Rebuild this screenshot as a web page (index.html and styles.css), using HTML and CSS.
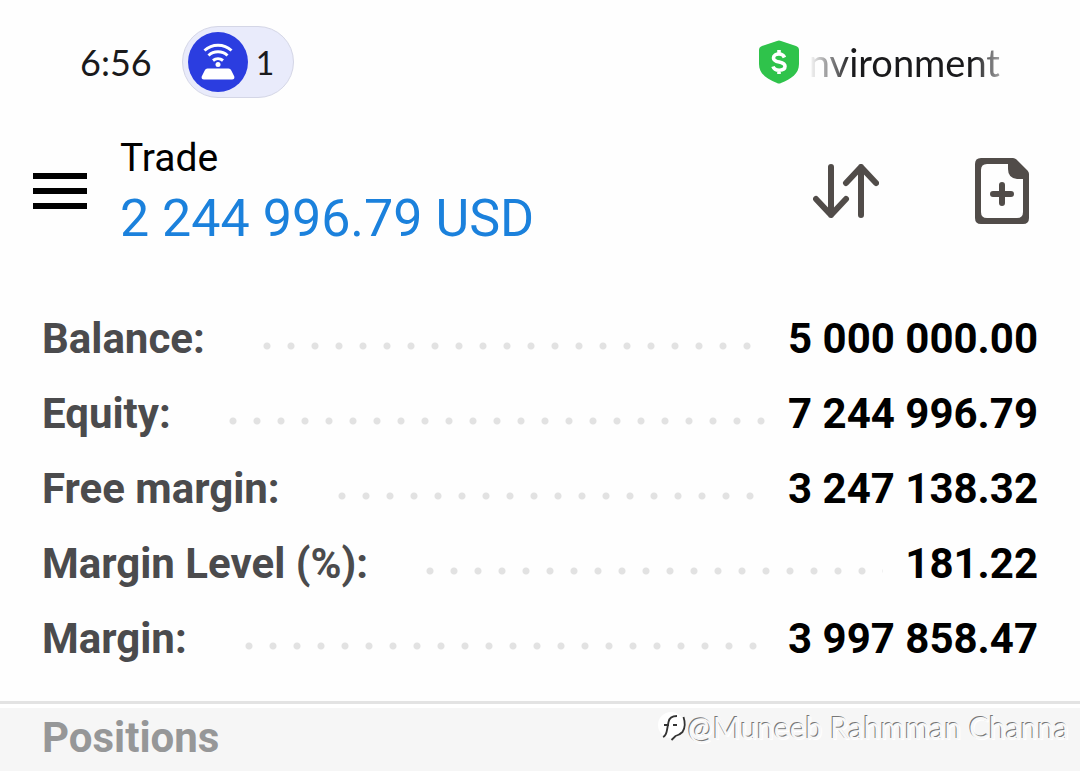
FILE: index.html
```html
<!DOCTYPE html>
<html lang="en">
<head>
    <meta charset="UTF-8">
    <meta name="viewport" content="width=device-width, initial-scale=1.0">
    <title>Trade</title>
    <link rel="stylesheet" href="styles.css">
</head>
<body>
    <div class="status-bar">
        <span class="clock">6:56</span>
        <div class="hotspot">
            <svg class="hotspot-icon" viewBox="0 0 60 60" aria-hidden="true">
                <circle cx="30" cy="30" r="30" fill="#2b3de0"/>
                <g fill="none" stroke="#fff" stroke-width="3" stroke-linecap="butt">
                    <path d="M16.500 18.500a20 20 0 0 1 27 0"/>
                    <path d="M20.500 23.500a14 14 0 0 1 19 0"/>
                    <path d="M25 28.500a8 8 0 0 1 10 0"/>
                </g>
                <circle cx="30" cy="32.500" r="2.500" fill="#fff"/>
                <path d="M19.500 36.500h21q2 0 2.800 2l3 6q.6 3-2.300 3H16q-2.900 0-2.300-3l3-6q.8-2 2.800-2z" fill="#fff"/>
            </svg>
            <span>1</span>
        </div>
        <div class="environment">
            <svg class="shield-icon" viewBox="0 0 40 44" aria-hidden="true">
                <path d="M18 1q2-1 4 0l15 5q3 1 3 4v14c0 10-8 15-18 19q-2 1-4 0C8 39 0 34 0 24V10q0-3 3-4z" fill="#2fc34b"/>
                <path d="M25.500 17.500c-1-2.500-3-3.500-5.500-3.500-3 0-5.500 1.300-5.500 3.900 0 5.600 11.500 2.800 11.500 8.400 0 2.600-2.500 3.900-5.800 3.900-3.200 0-5.400-1.200-6.200-3.700M20 10v4M20 30v4" fill="none" stroke="#fff" stroke-width="3.600"/>
            </svg>
            <span class="environment-text">nvironment</span>
        </div>
    </div>

    <header class="header">
        <button class="icon-button" aria-label="Menu">
            <svg class="menu-icon" viewBox="0 0 54 36">
                <path d="M0 3h54M0 18h54M0 33h54" stroke="#000" stroke-width="6"/>
            </svg>
        </button>
        <div class="heading">
            <h1>Trade</h1>
            <div class="profit">2 244 996.79 USD</div>
        </div>
        <button class="icon-button" aria-label="Sort">
            <svg class="sort-icon" viewBox="0 0 66 54" fill="none" stroke="#514c49" stroke-width="6" stroke-linecap="round" stroke-linejoin="round">
                <path d="M18 3v48M3 35l15 16 15-16M48 51V3M33 19L48 3l15 16"/>
            </svg>
        </button>
        <button class="icon-button" aria-label="New order">
            <svg class="order-icon" viewBox="0 0 54 66">
                <path fill="#514c49" fill-rule="evenodd" d="M6 0h32q2 0 3.500 1.500l11 11q1.500 1.500 1.500 3.500v44q0 6-6 6H6q-6 0-6-6V6q0-6 6-6zM12 6q-6 0-6 6v42q0 6 6 6h30q6 0 6-6V21h-6q-9-1-9-10V6z"/>
                <path d="M18 36h18M27 27v18" stroke="#514c49" stroke-width="6" stroke-linecap="round"/>
            </svg>
        </button>
    </header>

    <dl class="account">
        <div class="row"><dt>Balance:</dt><dd>5 000 000.00</dd></div>
        <div class="row"><dt>Equity:</dt><dd>7 244 996.79</dd></div>
        <div class="row"><dt>Free margin:</dt><dd>3 247 138.32</dd></div>
        <div class="row"><dt>Margin Level (%):</dt><dd>181.22</dd></div>
        <div class="row"><dt>Margin:</dt><dd>3 997 858.47</dd></div>
    </dl>

    <section class="positions">
        <h2>Positions</h2>
        <div class="watermark">
            <svg class="watermark-icon" viewBox="0 0 30 32" aria-hidden="true">
                <circle cx="13" cy="14" r="13" fill="#fff"/>
                <path d="M5 26q3-1 4-7l1.500-8q1-6 8.500-6M6 14h5M15 14h4" fill="none" stroke="#333" stroke-width="1.800"/>
                <path d="M25.500 6q3 9-1 15-3 3-7 4l-4 4" fill="none" stroke="#333" stroke-width="1.800"/>
            </svg>
            <span>@Muneeb Rahmman Channa</span>
        </div>
    </section>
</body>
</html>
```
FILE: styles.css
```css
* {
    box-sizing: border-box;
}

body {
    margin: 0;
    min-height: 100vh;
    display: flex;
    flex-direction: column;
    background: #fefefe;
    color: #000;
    font-family: Roboto, sans-serif;
}

h1, h2, dl, dt, dd {
    margin: 0;
}

svg {
    display: block;
}

/* Phone status bar */
.status-bar {
    display: flex;
    align-items: center;
    padding: 26px 80px 0;
    font-family: Lato, sans-serif;
    font-size: 36px;
    color: #1a1a1c;
}

.clock {
    margin-right: 30px;
}

.hotspot {
    display: flex;
    align-items: center;
    gap: 8px;
    width: 112px;
    height: 72px;
    padding-left: 5px;
    border: 1px solid #d4d6e6;
    border-radius: 36px;
    background: #e9ebfb;
    font-size: 32px;
}

.hotspot-icon {
    width: 60px;
    height: 60px;
}

.environment {
    display: flex;
    align-items: center;
    gap: 10px;
    margin-left: auto;
    font-size: 38px;
}

.shield-icon {
    width: 40px;
    height: 44px;
}

.environment-text {
    -webkit-mask-image: linear-gradient(to right, transparent, #000 22%, #000 86%, rgba(0, 0, 0, 0.4));
    mask-image: linear-gradient(to right, transparent, #000 22%, #000 86%, rgba(0, 0, 0, 0.4));
}

/* Header */
.header {
    display: flex;
    align-items: center;
    padding: 40px 51px 0 33px;
}

.icon-button {
    padding: 0;
    border: none;
    background: none;
    cursor: pointer;
}

.menu-icon {
    width: 54px;
    height: 36px;
}

.heading {
    flex: 1;
    margin-left: 33px;
}

h1 {
    margin-bottom: 16px;
    font-size: 39px;
    line-height: 40px;
    font-weight: 400;
}

.profit {
    font-size: 52px;
    line-height: 50px;
    color: #1b81dc;
}

.sort-icon {
    width: 66px;
    height: 54px;
    margin-right: 96px;
}

.order-icon {
    width: 54px;
    height: 66px;
}

/* Account summary */
.account {
    padding: 57px 42px 25px;
}

.row {
    display: flex;
    align-items: center;
    font-size: 42px;
    line-height: 75px;
    font-weight: 700;
}

dt {
    color: #4b4b4d;
}

/* Dotted leader */
.row::after {
    content: "";
    order: 1;
    flex: 1;
    height: 8px;
    margin: 15px 22px 0 58px;
    background: radial-gradient(circle at 4px 4px, #e2e2e2 3px, transparent 4px) 0 0 / 24px 8px repeat-x;
}

dd {
    order: 2;
}

/* Positions */
.positions {
    position: relative;
    flex: 1;
    border-top: 3px solid #e3e3e3;
    background: #f6f6f6;
    box-shadow: inset 0 4px #fff;
}

h2 {
    padding: 9px 42px 8px;
    font-size: 42px;
    line-height: 50px;
    color: #969798;
}

.watermark {
    position: absolute;
    top: 5px;
    right: 11px;
    display: flex;
    align-items: center;
    font-family: Lato, sans-serif;
    font-size: 30px;
    line-height: 36px;
    color: #f8f8f8;
    text-shadow: -1px -1px #777, 1px 1px #fff;
}

.watermark-icon {
    width: 30px;
    height: 32px;
}
```
